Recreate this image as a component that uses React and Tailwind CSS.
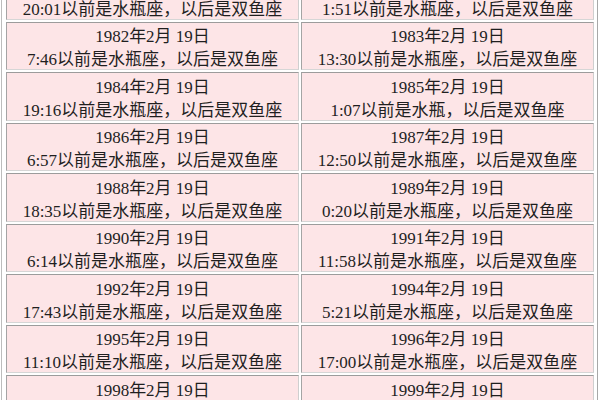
import React from "react";

const rows = [
  [
    { date: "1980年2月19日", time: "20:01", note: "以前是水瓶座，以后是双鱼座" },
    { date: "1981年2月19日", time: "1:51", note: "以前是水瓶座，以后是双鱼座" },
  ],
  [
    { date: "1982年2月 19日", time: "7:46", note: "以前是水瓶座，以后是双鱼座" },
    { date: "1983年2月 19日", time: "13:30", note: "以前是水瓶座，以后是双鱼座" },
  ],
  [
    { date: "1984年2月 19日", time: "19:16", note: "以前是水瓶座，以后是双鱼座" },
    { date: "1985年2月 19日", time: "1:07", note: "以前是水瓶，以后是双鱼座" },
  ],
  [
    { date: "1986年2月 19日", time: "6:57", note: "以前是水瓶座，以后是双鱼座" },
    { date: "1987年2月 19日", time: "12:50", note: "以前是水瓶座，以后是双鱼座" },
  ],
  [
    { date: "1988年2月 19日", time: "18:35", note: "以前是水瓶座，以后是双鱼座" },
    { date: "1989年2月 19日", time: "0:20", note: "以前是水瓶座，以后是双鱼座" },
  ],
  [
    { date: "1990年2月 19日", time: "6:14", note: "以前是水瓶座，以后是双鱼座" },
    { date: "1991年2月 19日", time: "11:58", note: "以前是水瓶座，以后是双鱼座" },
  ],
  [
    { date: "1992年2月 19日", time: "17:43", note: "以前是水瓶座，以后是双鱼座" },
    { date: "1994年2月 19日", time: "5:21", note: "以前是水瓶座，以后是双鱼座" },
  ],
  [
    { date: "1995年2月 19日", time: "11:10", note: "以前是水瓶座，以后是双鱼座" },
    { date: "1996年2月 19日", time: "17:00", note: "以前是水瓶座，以后是双鱼座" },
  ],
  [
    { date: "1998年2月 19日", time: "", note: "以前是水瓶座，以后是双鱼座" },
    { date: "1999年2月 19日", time: "", note: "以前是水瓶座，以后是双鱼座" },
  ],
];

const Cell = ({ date, time, note }) => {
  return (
    <div className="h-[48.5px] bg-[#fde5e7] border border-t-[#9c9c9c] border-l-[#a4a4a4] border-b-[#d6d6d6] border-r-[#cfcfcf] pt-[2.5px] text-center leading-[23px] text-[17px] text-[#1f1f1f] whitespace-nowrap">
      <div>{date}</div>
      <div>
        {time}
        {note}
      </div>
    </div>
  );
};

export default function App() {
  return (
    <div
      className="w-[600px] h-[400px] overflow-hidden bg-white"
      style={{ fontFamily: '"Liberation Serif", "Noto Sans CJK SC", serif' }}
    >
      {/* table frame */}
      <div className="ml-px -mt-[29px] w-[597px] border-x border-l-[#bdbdbd] border-r-[#a8a8a8] pl-[4px] pr-[3px]">
        <div className="grid grid-cols-2 gap-x-[2px] gap-y-[2px]">
          {rows.map((row, i) =>
            row.map((cell, j) => <Cell key={i + "-" + j} {...cell} />)
          )}
        </div>
      </div>
    </div>
  );
}
